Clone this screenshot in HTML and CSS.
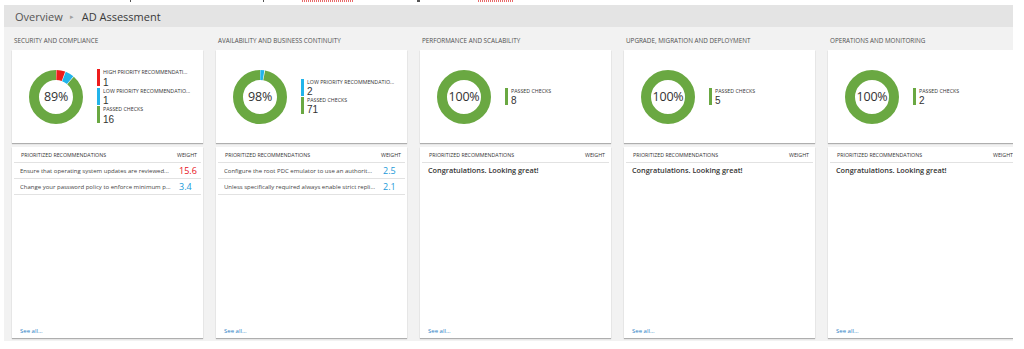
FILE: index.html
```html
<!DOCTYPE html>
<html lang="en">
<head>
<meta charset="utf-8">
<title>AD Assessment</title>
<link rel="stylesheet" href="styles.css">
</head>
<body>
<div class="top-strip">
  <span class="mark blk" style="margin-left:130px"></span>
  <span class="mark blk" style="margin-left:132px"></span>
  <span class="mark red" style="margin-left:38px;width:51px"></span>
  <span class="mark blk" style="margin-left:64px;width:3px"></span>
  <span class="mark red" style="margin-left:58px;width:35px"></span>
</div>
<div class="app">
  <div class="header">
    <span class="crumb">Overview</span>
    <span class="crumb-sep">&#9656;</span>
    <span class="crumb current">AD Assessment</span>
  </div>
  <div class="board">

    <section class="col">
      <h2 class="col-title">SECURITY AND COMPLIANCE</h2>
      <div class="card summary">
        <div class="donut">
          <svg viewBox="0 0 54 54" class="ring">
            <circle cx="27" cy="27" r="22" class="seg green" stroke-dasharray="122 200" stroke-dashoffset="-15.8"/>
            <circle cx="27" cy="27" r="22" class="seg red" stroke-dasharray="7.2 200" stroke-dashoffset="-0.4"/>
            <circle cx="27" cy="27" r="22" class="seg blue" stroke-dasharray="7.2 200" stroke-dashoffset="-8.1"/>
          </svg>
          <span class="pct">89%</span>
        </div>
        <ul class="legend">
          <li class="item high"><span class="lbl">HIGH PRIORITY RECOMMENDATI...</span><span class="num">1</span></li>
          <li class="item low"><span class="lbl">LOW PRIORITY RECOMMENDATIO...</span><span class="num">1</span></li>
          <li class="item pass"><span class="lbl">PASSED CHECKS</span><span class="num">16</span></li>
        </ul>
      </div>
      <div class="card recs">
        <div class="recs-head"><span>PRIORITIZED RECOMMENDATIONS</span><span class="w">WEIGHT</span></div>
        <div class="rec"><span class="rec-text">Ensure that operating system updates are reviewed...</span><span class="rec-w high">15.6</span></div>
        <div class="rec"><span class="rec-text">Change your password policy to enforce minimum p...</span><span class="rec-w low">3.4</span></div>
        <a class="see-all">See all...</a>
      </div>
    </section>

    <section class="col">
      <h2 class="col-title">AVAILABILITY AND BUSINESS CONTINUITY</h2>
      <div class="card summary">
        <div class="donut">
          <svg viewBox="0 0 54 54" class="ring">
            <circle cx="27" cy="27" r="22" class="seg green" stroke-dasharray="133.6 200" stroke-dashoffset="-4.3"/>
            <circle cx="27" cy="27" r="22" class="seg blue" stroke-dasharray="3.4 200" stroke-dashoffset="-0.3"/>
          </svg>
          <span class="pct">98%</span>
        </div>
        <ul class="legend">
          <li class="item low"><span class="lbl">LOW PRIORITY RECOMMENDATIO...</span><span class="num">2</span></li>
          <li class="item pass"><span class="lbl">PASSED CHECKS</span><span class="num">71</span></li>
        </ul>
      </div>
      <div class="card recs">
        <div class="recs-head"><span>PRIORITIZED RECOMMENDATIONS</span><span class="w">WEIGHT</span></div>
        <div class="rec"><span class="rec-text">Configure the root PDC emulator to use an authorit...</span><span class="rec-w low">2.5</span></div>
        <div class="rec"><span class="rec-text">Unless specifically required always enable strict repli...</span><span class="rec-w low">2.1</span></div>
        <a class="see-all">See all...</a>
      </div>
    </section>

    <section class="col">
      <h2 class="col-title">PERFORMANCE AND SCALABILITY</h2>
      <div class="card summary">
        <div class="donut">
          <svg viewBox="0 0 54 54" class="ring">
            <circle cx="27" cy="27" r="22" class="seg green"/>
          </svg>
          <span class="pct">100%</span>
        </div>
        <ul class="legend">
          <li class="item pass"><span class="lbl">PASSED CHECKS</span><span class="num">8</span></li>
        </ul>
      </div>
      <div class="card recs">
        <div class="recs-head"><span>PRIORITIZED RECOMMENDATIONS</span><span class="w">WEIGHT</span></div>
        <div class="congrats">Congratulations. Looking great!</div>
        <a class="see-all">See all...</a>
      </div>
    </section>

    <section class="col">
      <h2 class="col-title">UPGRADE, MIGRATION AND DEPLOYMENT</h2>
      <div class="card summary">
        <div class="donut">
          <svg viewBox="0 0 54 54" class="ring">
            <circle cx="27" cy="27" r="22" class="seg green"/>
          </svg>
          <span class="pct">100%</span>
        </div>
        <ul class="legend">
          <li class="item pass"><span class="lbl">PASSED CHECKS</span><span class="num">5</span></li>
        </ul>
      </div>
      <div class="card recs">
        <div class="recs-head"><span>PRIORITIZED RECOMMENDATIONS</span><span class="w">WEIGHT</span></div>
        <div class="congrats">Congratulations. Looking great!</div>
        <a class="see-all">See all...</a>
      </div>
    </section>

    <section class="col">
      <h2 class="col-title">OPERATIONS AND MONITORING</h2>
      <div class="card summary">
        <div class="donut">
          <svg viewBox="0 0 54 54" class="ring">
            <circle cx="27" cy="27" r="22" class="seg green"/>
          </svg>
          <span class="pct">100%</span>
        </div>
        <ul class="legend">
          <li class="item pass"><span class="lbl">PASSED CHECKS</span><span class="num">2</span></li>
        </ul>
      </div>
      <div class="card recs">
        <div class="recs-head"><span>PRIORITIZED RECOMMENDATIONS</span><span class="w">WEIGHT</span></div>
        <div class="congrats">Congratulations. Looking great!</div>
        <a class="see-all">See all...</a>
      </div>
    </section>

  </div>
</div>
</body>
</html>
```

FILE: styles.css
```css
* { box-sizing: border-box; }

html, body {
  margin: 0;
  padding: 0;
  background: #ffffff;
}

body {
  font-family: "Open Sans", "Noto Sans", "Liberation Sans", sans-serif;
  color: #444444;
  width: 1024px;
  height: 349px;
  overflow: hidden;
}

/* thin strip of cropped text above the screenshot */
.top-strip {
  height: 5px;
  display: flex;
  align-items: flex-start;
}
.mark {
  display: inline-block;
  height: 2px;
  width: 1px;
  flex: none;
}
.mark.blk { background: #555; height: 2px; }
.mark.red {
  background: repeating-linear-gradient(90deg, #e86a6a 0 1px, transparent 1px 2px);
  height: 2px;
}

.app {
  margin-left: 4px;
  width: 1009px;
  overflow: hidden;
}

.header {
  height: 22px;
  background: #e4e4e4;
  display: flex;
  align-items: center;
  padding-left: 11px;
  font-size: 11px;
  color: #555555;
}
.crumb-sep {
  font-size: 7px;
  color: #a0a0a0;
  margin: 0 8px 0 7px;
}
.crumb.current { color: #3a3a3a; }

.board {
  background: #f2f2f2;
  height: 314px;
  display: flex;
  gap: 13px;
  padding: 0 8px 3px 8px;
}

.col {
  flex: 0 0 191px;
  display: flex;
  flex-direction: column;
}

.col-title {
  margin: 0;
  padding: 10px 0 5px 2px;
  height: 23px;
  font-size: 6.3px;
  line-height: 8px;
  font-weight: 400;
  color: #505050;
  white-space: nowrap;
}

.card {
  background: #ffffff;
  box-shadow: 0 1px 1px rgba(0, 0, 0, 0.28);
}

.summary {
  height: 93px;
  display: flex;
  align-items: center;
  padding-left: 17px;
}

.donut {
  width: 54px;
  height: 54px;
  display: grid;
  place-items: center;
  flex: none;
}
.donut > * { grid-area: 1 / 1; }
.ring {
  width: 54px;
  height: 54px;
  transform: rotate(-90deg);
}
.seg {
  fill: none;
  stroke-width: 10;
}
.seg.green { stroke: #6aa842; }
.seg.red { stroke: #ee1c1c; }
.seg.blue { stroke: #22b4ea; }

.pct {
  font-size: 12.5px;
  color: #333333;
  letter-spacing: -0.2px;
}

.legend {
  list-style: none;
  margin: 1px 0 0 14px;
  padding: 0;
  display: flex;
  flex-direction: column;
  min-width: 0;
}
.item {
  display: grid;
  grid-template-columns: 3px auto;
  column-gap: 3px;
  align-items: start;
  --bar: #6aa842;
}
.item::before {
  content: "";
  grid-row: 1 / span 2;
  grid-column: 1;
  align-self: stretch;
  background: var(--bar);
  margin-bottom: 1.5px;
}
.item.high { --bar: #ee1c1c; }
.item.low { --bar: #22b4ea; }
.lbl {
  grid-column: 2;
  font-size: 5.3px;
  line-height: 7.3px;
  color: #333333;
  white-space: nowrap;
}
.num {
  grid-column: 2;
  font-family: "Liberation Sans", Arial, sans-serif;
  font-size: 10px;
  line-height: 11.2px;
  color: #333333;
}

.recs {
  margin-top: 4px;
  height: 191px;
  display: flex;
  flex-direction: column;
  padding: 0 2px;
}

.recs-head,
.rec {
  display: grid;
  grid-template-columns: 1fr 23px;
  column-gap: 6px;
  align-items: center;
  border-bottom: 1px solid #e2e2e2;
  padding: 0 0 0 6px;
}

.recs-head {
  height: 16px;
  font-size: 5.3px;
  color: #333333;
  padding-left: 7px;
}
.recs-head .w { margin-left: -1px; }

.rec {
  height: 16px;
}
.rec-text {
  font-size: 6px;
  color: #444444;
  white-space: nowrap;
  overflow: hidden;
  text-overflow: ellipsis;
}
.rec-w {
  font-size: 9px;
  margin-left: 1px;
}
.rec-w.high { color: #e81123; }
.rec-w.low { color: #1a9ad9; }

.congrats {
  font-size: 7.3px;
  font-weight: 600;
  color: #333333;
  padding: 2px 0 0 6px;
  line-height: 10px;
}

.see-all {
  margin-top: auto;
  padding: 0 0 3px 6px;
  font-size: 6px;
  line-height: 8px;
  color: #2a80c4;
}
```
